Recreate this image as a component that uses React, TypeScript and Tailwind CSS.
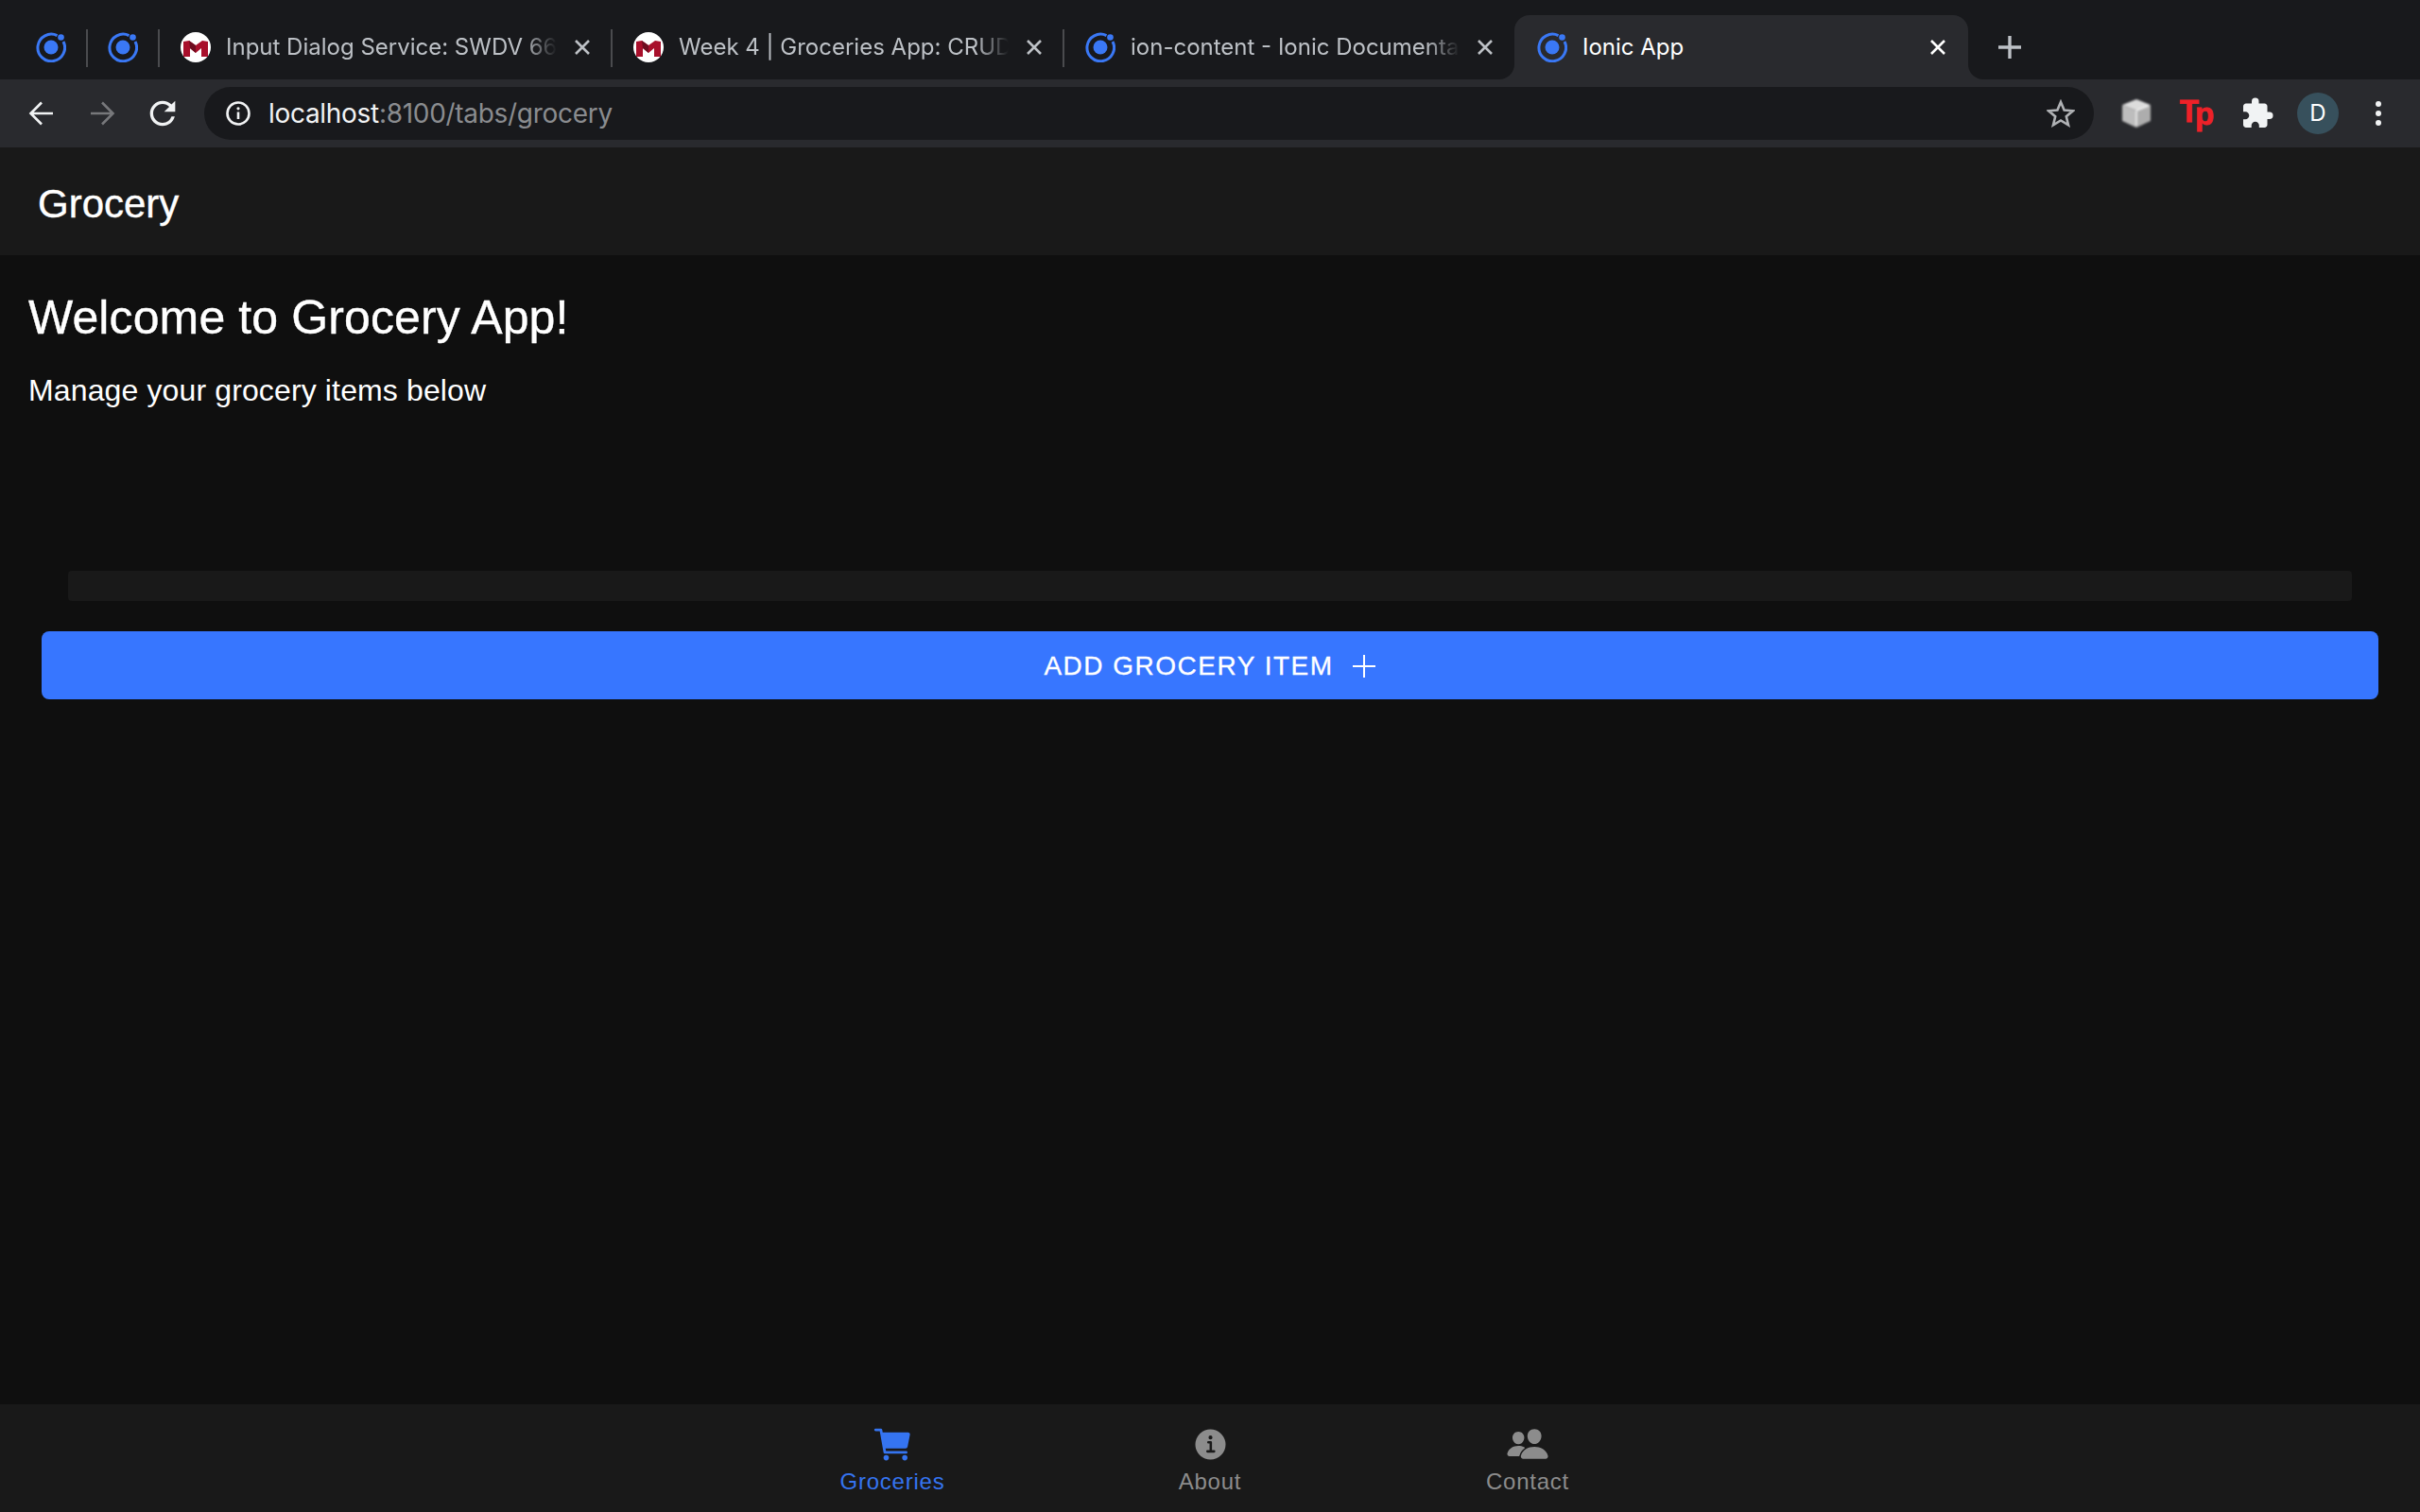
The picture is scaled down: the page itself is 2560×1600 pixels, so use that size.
import React from "react";
import { MdExtension, MdRefresh } from "react-icons/md";
import { IoCart, IoInformationCircle, IoPeople } from "react-icons/io5";

function IonicLogo() {
  return (
    <svg width="32" height="32" viewBox="0 0 32 32" className="shrink-0">
      <circle cx="16" cy="16" r="7.5" fill="#3a78f5" />
      <circle cx="26.5" cy="5.5" r="3.3" fill="#3a78f5" />
      <path
        d="M22.5 3.6 A14.3 14.3 0 1 0 29 10"
        fill="none"
        stroke="#3a78f5"
        strokeWidth="3"
      />
    </svg>
  );
}

function MaryvilleLogo() {
  return (
    <svg width="32" height="32" viewBox="0 0 32 32" className="shrink-0">
      <circle cx="16" cy="16" r="16" fill="#fff" />
      <polygon points="3,10 9,9 16,14 23,9 29,10 29,26 22,26 22,17 16,22 10,17 10,26 3,26" fill="#a80f2b" />
      <polygon points="9,9 16,14 16,22 10,17" fill="#6e0c1f" />
    </svg>
  );
}

function CloseIcon({ color }: { color: string }) {
  return (
    <svg width="20" height="20" viewBox="0 0 20 20" className="shrink-0">
      <path d="M3 3 L17 17 M17 3 L3 17" stroke={color} strokeWidth="2.6" fill="none" />
    </svg>
  );
}

function PinnedTab({ divider }: { divider: boolean }) {
  return (
    <div className="flex h-[68px] w-[76px] shrink-0 items-center justify-center relative">
      <IonicLogo />
      {divider && <div className="absolute right-[-1px] top-[15px] h-[40px] w-[2px] bg-[#4a4b4e]" />}
    </div>
  );
}

function Tab({
  icon,
  title,
  divider,
  width,
}: {
  icon: React.ReactNode;
  title: string;
  divider: boolean;
  width: string;
}) {
  return (
    <div className={`relative flex h-[68px] shrink-0 items-center pl-[23px] pr-[21px] ${width}`}>
      {icon}
      <div className="ml-[16px] flex-1 overflow-hidden whitespace-nowrap text-[24px] text-[#bdc1c6] [mask-image:linear-gradient(to_right,black_90%,transparent)]">
        {title}
      </div>
      <div className="ml-[17px]">
        <CloseIcon color="#bdc1c6" />
      </div>
      {divider && <div className="absolute right-[-1px] top-[15px] h-[40px] w-[2px] bg-[#4a4b4e]" />}
    </div>
  );
}

function ActiveTab() {
  return (
    <div className="relative flex h-[68px] w-[480px] shrink-0 items-center rounded-t-[16px] bg-[#292a2e] pl-[24px] pr-[22px]">
      <IonicLogo />
      <div className="ml-[16px] flex-1 whitespace-nowrap text-[24px] text-white">Ionic App</div>
      <CloseIcon color="#ffffff" />
      <div className="absolute bottom-0 right-[-16px] h-[16px] w-[16px] bg-[#292a2e]">
        <div className="h-full w-full rounded-bl-[16px] bg-[#18191c]" />
      </div>
      <div className="absolute bottom-0 left-[-16px] h-[16px] w-[16px] bg-[#292a2e]">
        <div className="h-full w-full rounded-br-[16px] bg-[#18191c]" />
      </div>
    </div>
  );
}

function ToolbarButton({ children }: { children: React.ReactNode }) {
  return <div className="flex h-[64px] w-[64px] shrink-0 items-center justify-center">{children}</div>;
}

function Arrow({ color, flip }: { color: string; flip?: boolean }) {
  return (
    <svg width="28" height="28" viewBox="0 0 28 28" className={flip ? "rotate-180" : ""}>
      <path d="M26 14 H3 M14 2.5 L2.5 14 L14 25.5" stroke={color} strokeWidth="2.6" fill="none" />
    </svg>
  );
}

function CubeIcon() {
  return (
    <svg width="32" height="30" viewBox="0 0 32 30" className="blur-[1px]">
      <polygon points="16,0 31,6 16,12 1,6" fill="#dcdcdc" />
      <polygon points="1,6 16,12 16,30 1,23" fill="#bdbdbd" />
      <polygon points="31,6 16,12 16,30 31,23" fill="#adadad" />
      <path d="M16 12 V28 M16 12 L29 7" stroke="#f2f2f2" strokeWidth="1.5" fill="none" />
    </svg>
  );
}

function TabBarItem({
  label,
  icon,
  active,
}: {
  label: string;
  icon: React.ReactNode;
  active?: boolean;
}) {
  return (
    <div
      className={`flex w-[336px] flex-col items-center pt-[22px] ${
        active ? "text-[#3574f0]" : "text-[#8c8c8c]"
      }`}
    >
      <div className="flex h-[40px] items-center justify-center">{icon}</div>
      <div className="mt-[4px] text-[24px] leading-[32px] tracking-[0.75px]">{label}</div>
    </div>
  );
}

export default function App() {
  return (
    <div className="flex h-screen w-full flex-col overflow-hidden bg-[#0f0f0f] font-['Liberation_Sans',Arial,sans-serif] text-white">
      {/* browser tabs */}
      <div className="flex h-[84px] shrink-0 items-end bg-[#18191c] pl-[16px] font-['Inter',sans-serif]">
        <PinnedTab divider />
        <PinnedTab divider />
        <Tab width="w-[479px]" icon={<MaryvilleLogo />} title="Input Dialog Service: SWDV 665" divider />
        <Tab width="w-[478px]" icon={<MaryvilleLogo />} title="Week 4 | Groceries App: CRUD" divider />
        <Tab width="w-[477px]" icon={<IonicLogo />} title="ion-content - Ionic Documentation" divider={false} />
        <ActiveTab />
        <div className="mb-[14px] ml-[24px] flex h-[40px] w-[40px] items-center justify-center">
          <svg width="24" height="24" viewBox="0 0 24 24">
            <path d="M12 0 V24 M0 12 H24" stroke="#bdc1c6" strokeWidth="3.4" fill="none" />
          </svg>
        </div>
      </div>

      {/* address bar */}
      <div className="flex h-[72px] shrink-0 items-center bg-[#292a2e] px-[12px] font-['Inter',sans-serif]">
        <ToolbarButton>
          <Arrow color="#f1f3f4" />
        </ToolbarButton>
        <ToolbarButton>
          <Arrow color="#77787b" flip />
        </ToolbarButton>
        <ToolbarButton>
          <MdRefresh size={40} color="#f1f3f4" />
        </ToolbarButton>
        <div className="ml-[12px] flex h-[56px] flex-1 items-center rounded-full bg-[#18191c] pl-[23px] pr-[20px]">
          <svg width="26" height="26" viewBox="0 0 26 26" className="shrink-0">
            <circle cx="13" cy="13" r="11.5" stroke="#f1f3f4" strokeWidth="2.6" fill="none" />
            <path d="M13 11.5 V19" stroke="#f1f3f4" strokeWidth="2.6" />
            <circle cx="13" cy="7.8" r="1.6" fill="#f1f3f4" />
          </svg>
          <div className="ml-[19px] flex-1 text-[28px] leading-none tracking-[-0.3px] text-[#f1f3f4]">
            localhost<span className="text-[#8a8c8f]">:8100/tabs/grocery</span>
          </div>
          <svg width="30" height="30" viewBox="0 0 30 30" className="shrink-0">
            <polygon
              points="15,3 18.6,11.6 27.8,12.3 20.8,18.3 23,27.3 15,22.5 7,27.3 9.2,18.3 2.2,12.3 11.4,11.6"
              stroke="#b0b2b5"
              strokeWidth="2.6"
              fill="none"
            />
          </svg>
        </div>
        <div className="ml-[13px] flex">
          <ToolbarButton>
            <CubeIcon />
          </ToolbarButton>
          <ToolbarButton>
            <div className="flex h-[30px] items-start font-['Liberation_Sans',sans-serif] text-[33px] font-bold leading-[26px] text-[#ee2128] [-webkit-text-stroke:0.8px_#ee2128]">
              <span>T</span>
              <span className="ml-[-4px] mt-[3px]">p</span>
            </div>
          </ToolbarButton>
          <ToolbarButton>
            <MdExtension size={36} color="#f1f3f4" />
          </ToolbarButton>
          <ToolbarButton>
            <div className="flex h-[44px] w-[44px] items-center justify-center rounded-full bg-[#37505c] text-[24px] text-white">
              D
            </div>
          </ToolbarButton>
          <ToolbarButton>
            <div className="flex flex-col gap-[4px]">
              <div className="h-[6px] w-[6px] rounded-full bg-[#f1f3f4]" />
              <div className="h-[6px] w-[6px] rounded-full bg-[#f1f3f4]" />
              <div className="h-[6px] w-[6px] rounded-full bg-[#f1f3f4]" />
            </div>
          </ToolbarButton>
        </div>
      </div>

      {/* ion-header */}
      <div className="flex h-[114px] shrink-0 items-center bg-[#191919] pl-[40px] pt-[4px] text-[42px] [-webkit-text-stroke:0.4px_white]">
        Grocery
      </div>

      {/* ion-content */}
      <div className="flex-1">
        <div className="px-[30px] pt-[36px]">
          <h1 className="text-[50px] leading-[60px] tracking-[0.12px] [-webkit-text-stroke:0.4px_white]">
            Welcome to Grocery App!
          </h1>
          <p className="mt-[25px] text-[32px] leading-[44px] tracking-[0.13px]">Manage your grocery items below</p>
        </div>
        <div className="mt-[169px] px-[44px]">
          <div className="mx-[28px] h-[32px] rounded-[4px] bg-[#191919]" />
          <button className="mt-[32px] flex h-[72px] w-full items-center justify-center rounded-[8px] bg-[#3776ff] pt-[1px] text-[28px] tracking-[1.5px] text-white [-webkit-text-stroke:0.3px_white]">
            ADD GROCERY ITEM
            <svg width="26" height="26" viewBox="0 0 26 26" className="ml-[19px]">
              <path d="M13 1 V25 M1 13 H25" stroke="#fff" strokeWidth="2" fill="none" />
            </svg>
          </button>
        </div>
      </div>

      {/* ion-tab-bar */}
      <div className="flex h-[114px] shrink-0 justify-center bg-[#191919]">
        <TabBarItem label="Groceries" active icon={<IoCart size={45} />} />
        <TabBarItem label="About" icon={<IoInformationCircle size={41} />} />
        <TabBarItem label="Contact" icon={<IoPeople size={46} />} />
      </div>
    </div>
  );
}
